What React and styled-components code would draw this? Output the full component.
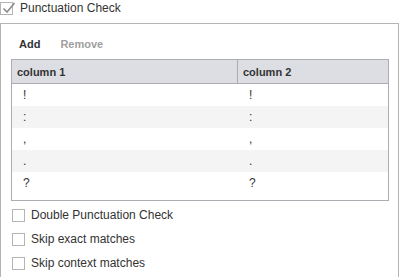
import React from "react";
import styled, { createGlobalStyle } from "styled-components";

const Global = createGlobalStyle`
  html, body { margin: 0; padding: 0; background: #fff; }
  body { font-family: "Liberation Sans", Arial, sans-serif; color: #333; }
  * { box-sizing: border-box; }
`;

const Page = styled.div`
  width: 400px;
  height: 277px;
  overflow: hidden;
`;

const CheckRow = styled.label`
  display: flex;
  align-items: center;
  height: ${(p) => (p.$top ? "16px" : "24px")};
  gap: ${(p) => (p.$top ? "7px" : "6px")};
  margin-bottom: ${(p) => (p.$top ? "7px" : "0")};
  font-size: 12px;
  color: #333;
`;

const Box = styled.span`
  width: 13px;
  height: 13px;
  border: 1px solid #b4b4b4;
  background: #fff;
  position: relative;
  flex: none;
`;

const Tick = styled.svg`
  position: absolute;
  left: 1px;
  top: -2px;
`;

const Group = styled.div`
  width: 399px;
  height: 260px;
  border: 1px solid #b4b4b4;
  padding: 0 9px 0 10px;
`;

const Toolbar = styled.div`
  display: flex;
  align-items: center;
  gap: 20px;
  height: 30px;
  margin-top: 5px;
  padding-left: 8px;
`;

const ToolButton = styled.span`
  font-size: 11px;
  font-weight: bold;
  color: ${(p) => (p.$disabled ? "#a0a0a0" : "#333")};
`;

const Grid = styled.div`
  width: 378px;
  border: 1px solid #acacb2;
  padding-bottom: 6px;
`;

const HeadRow = styled.div`
  display: grid;
  grid-template-columns: 225px 1fr;
  height: 24px;
  background: #dddee3;
  border-bottom: 1px solid #acacb2;
`;

const HeadCell = styled.div`
  display: flex;
  align-items: center;
  padding-left: 5px;
  font-size: 11px;
  font-weight: bold;
  color: #333;
  border-left: ${(p) => (p.$first ? "none" : "1px solid #acacb2")};
`;

const BodyRow = styled.div`
  display: grid;
  grid-template-columns: 226px 1fr;
  height: 22px;
  background: ${(p) => (p.$alt ? "#f4f4f4" : "#fff")};
`;

const Cell = styled.div`
  display: flex;
  align-items: center;
  padding-left: 11px;
  font-size: 12px;
  color: #333;
`;

const Options = styled.div`
  margin-top: 2px;
  padding-left: 1px;
`;

const marks = ["!", ":", ",", ".", "?"];

function CheckBox({ checked }) {
  return (
    <Box>
      {checked && (
        <Tick width="14" height="14" viewBox="0 0 14 14">
          <path d="M1.5 7.5 L5 11 L12.5 2" fill="none" stroke="#8c8c8c" strokeWidth="1.6" />
        </Tick>
      )}
    </Box>
  );
}

export default function App() {
  return (
    <Page>
      <Global />
      <CheckRow $top>
        <CheckBox checked />
        Punctuation Check
      </CheckRow>
      <Group>
        <Toolbar>
          <ToolButton>Add</ToolButton>
          <ToolButton $disabled>Remove</ToolButton>
        </Toolbar>
        <Grid>
          <HeadRow>
            <HeadCell $first>column 1</HeadCell>
            <HeadCell>column 2</HeadCell>
          </HeadRow>
          {marks.map((m, i) => (
            <BodyRow key={i} $alt={i % 2 === 1}>
              <Cell>{m}</Cell>
              <Cell>{m}</Cell>
            </BodyRow>
          ))}
        </Grid>
        <Options>
          <CheckRow>
            <CheckBox />
            Double Punctuation Check
          </CheckRow>
          <CheckRow>
            <CheckBox />
            Skip exact matches
          </CheckRow>
          <CheckRow>
            <CheckBox />
            Skip context matches
          </CheckRow>
        </Options>
      </Group>
    </Page>
  );
}
